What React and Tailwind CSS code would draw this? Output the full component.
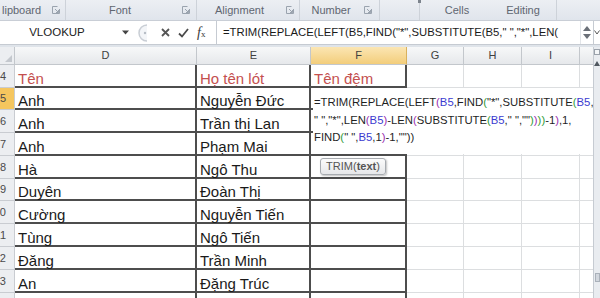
import React from "react";

const K = "#1f1f1f";
const BL = "#3b3bd0";
const PU = "#9a2fb0";
const GR = "#2f9b3a";

const formulaLines = [
  [["=TRIM(REPLACE(LEFT", K], ["(", PU], ["B5", BL], [",FIND", K], ["(", GR], ['"*",SUBSTITUTE', K], ["(", GR], ["B5", BL], [",", K]],
  [['" ","*",LEN', K], ["(", PU], ["B5", BL], [")", PU], ["-LEN", K], ["(", PU], ["SUBSTITUTE", K], ["(", GR], ["B5", BL], ['," ",""', K], [")", GR], [")", PU], [")", GR], [")", GR], ["-1", K], [")", PU], [",1,", K]],
  [["FIND", K], ["(", GR], ['" ",', K], ["B5", BL], [",1", K], [")", PU], ['-1,""))', K]],
];

const rows = [
  { n: 4, d: "Tên", e: "Họ tên lót", f: "Tên đệm", head: true, h: "h-[23px]" },
  { n: 5, d: "Anh", e: "Nguyễn Đức", h: "h-[22px]", active: true },
  { n: 6, d: "Anh", e: "Trần thị Lan", h: "h-[23px]" },
  { n: 7, d: "Anh", e: "Phạm Mai", h: "h-[23px]" },
  { n: 8, d: "Hà", e: "Ngô Thu", h: "h-[23px]" },
  { n: 9, d: "Duyên", e: "Đoàn Thị", h: "h-[22px]" },
  { n: 10, d: "Cường", e: "Nguyễn Tiến", h: "h-[23px]" },
  { n: 11, d: "Tùng", e: "Ngô Tiến", h: "h-[23px]" },
  { n: 12, d: "Đăng", e: "Trần Minh", h: "h-[23px]" },
  { n: 13, d: "An", e: "Đặng Trúc", h: "h-[23px]" },
  { n: 14, d: "", e: "", h: "h-[23px]" },
];

function Launcher() {
  return (
    <svg width="8" height="8" viewBox="0 0 8 8" className="shrink-0">
      <path d="M0.5 0.5H5.5M0.5 0.5V7.5H7.5V3" stroke="#9aa3ae" strokeWidth="1" fill="none" />
      <path d="M3 3L6.5 6.5M6.5 4V6.5H4" stroke="#9aa3ae" strokeWidth="1" fill="none" />
    </svg>
  );
}

function RibbonLabels() {
  return (
    <div className="flex h-[21px] bg-linear-to-b from-[#eceff3] to-[#e0e5ec] border-b border-[#c9ced6] text-[11px] text-[#5f6670]">
      <div className="w-[66px] shrink-0 flex items-center justify-between pl-[2px] pr-[5px] border-r border-[#cdd2d9]">
        <span>lipboard</span>
        <Launcher />
      </div>
      <div className="w-[131px] shrink-0 flex items-center pr-[6px] border-r border-[#cdd2d9]">
        <span className="flex-1 text-center pr-[8px]">Font</span>
        <Launcher />
      </div>
      <div className="w-[103px] shrink-0 flex items-center pr-[5px] border-r border-[#cdd2d9]">
        <span className="flex-1 text-center pr-[4px]">Alignment</span>
        <Launcher />
      </div>
      <div className="w-[80px] shrink-0 flex items-center pr-[7px] border-r border-[#cdd2d9]">
        <span className="flex-1 text-center pr-[2px]">Number</span>
        <Launcher />
      </div>
      <div className="w-[40px] shrink-0 border-r border-[#cdd2d9] relative">
        <div className="absolute right-[-2px] top-0 w-[3px] h-[3px] bg-[#7d848d]" />
      </div>
      <div className="w-[70px] shrink-0 flex items-center justify-center pl-[4px]">
        <span>Cells</span>
      </div>
      <div className="w-[67px] shrink-0 flex items-center justify-center border-r border-[#cdd2d9]">
        <span>Editing</span>
      </div>
      <div className="flex-1" />
    </div>
  );
}

function FormulaBar() {
  return (
    <div className="flex h-[26px] bg-[#dfe4ea] pb-[2px]">
      <div className="flex flex-1 h-[24px] bg-white border-b border-[#c6cbd2] items-center">
        <div className="w-[112px] shrink-0 flex items-center justify-center text-[11.5px] text-[#222] pl-[2px]">
          VLOOKUP
        </div>
        <div className="w-[26px] shrink-0 flex items-center justify-center">
          <svg width="7" height="5" viewBox="0 0 7 5">
            <path d="M0 0.5H7L3.5 4.5Z" fill="#444" />
          </svg>
        </div>
        <div className="w-[12px] shrink-0 flex items-center">
          <svg width="10" height="18" viewBox="0 0 10 18">
            <path d="M9 1A8 8 0 0 0 9 17" stroke="#c9ced5" strokeWidth="1.5" fill="#f3f5f8" />
            <circle cx="7" cy="9" r="1.2" fill="#b7bdc5" />
          </svg>
        </div>
        <div className="w-[66px] shrink-0 flex items-center gap-[8px] pl-[11px]">
          <svg width="9" height="9" viewBox="0 0 9 9">
            <path d="M1 1L8 8M8 1L1 8" stroke="#555" strokeWidth="1.8" />
          </svg>
          <svg width="11" height="10" viewBox="0 0 11 10">
            <path d="M1 5.5L4 8.5L10 1" stroke="#4a4a4a" strokeWidth="1.8" fill="none" />
          </svg>
          <span className="font-['Liberation_Serif',serif] italic text-[14px] leading-none text-[#3a3a3a]">
            f<span className="text-[9px] not-italic">x</span>
          </span>
        </div>
        <div className="flex-1 h-full flex items-center border-l border-[#c6cbd2] pl-[6px] text-[11.3px] text-[#1a1a1a] whitespace-nowrap overflow-hidden">
          =TRIM(REPLACE(LEFT(B5,FIND("*",SUBSTITUTE(B5," ","*",LEN(
        </div>
        <div className="w-[13px] shrink-0 h-full flex flex-col items-center justify-center gap-[3px] border-l border-[#e2e5e9]">
          <svg width="8" height="5" viewBox="0 0 8 5"><path d="M0 5L4 0L8 5Z" fill="#6b7078" /></svg>
          <svg width="8" height="5" viewBox="0 0 8 5"><path d="M0 0L4 5L8 0Z" fill="#6b7078" /></svg>
        </div>
        <div className="w-[7px] shrink-0 h-full flex items-center border-l border-[#c6cbd2]">
          <svg width="6" height="5" viewBox="0 0 6 5"><path d="M0.5 0.5L3 4L5.5 0.5" stroke="#555" fill="none" /></svg>
        </div>
      </div>
    </div>
  );
}

function ColumnHeaders() {
  const base = "h-[18px] shrink-0 flex items-center justify-center border-r border-b border-[#c3c7cc] text-[11px] text-[#3f3f3f]";
  return (
    <div className="flex">
      <div className="w-[15px] h-[18px] shrink-0 border-r border-b border-[#c3c7cc] bg-[#eceef1] flex items-end justify-end p-[2px]">
        <svg width="7" height="7" viewBox="0 0 7 7"><path d="M7 0V7H0Z" fill="#c4c8ce" /></svg>
      </div>
      <div className={base + " w-[182px] bg-linear-to-b from-[#f7f8f9] to-[#e6e8eb]"}>D</div>
      <div className={base + " w-[114px] bg-linear-to-b from-[#f7f8f9] to-[#e6e8eb]"}>E</div>
      <div className={base + " w-[96px] bg-linear-to-b from-[#fbe6b3] to-[#f3cd7a] border-r-[#d9b15d]"}>F</div>
      <div className={base + " w-[57px] bg-linear-to-b from-[#f7f8f9] to-[#e6e8eb]"}>G</div>
      <div className={base + " w-[58px] bg-linear-to-b from-[#f7f8f9] to-[#e6e8eb]"}>H</div>
      <div className={base + " w-[58px] bg-linear-to-b from-[#f7f8f9] to-[#e6e8eb]"}>I</div>
      <div className={base + " w-[13px] bg-linear-to-b from-[#f7f8f9] to-[#e6e8eb] border-r-0"}></div>
    </div>
  );
}

function Row({ r }) {
  const txt = r.head ? "text-[#c4504f]" : "text-[#1a1a1a]";
  const dark = "shrink-0 border-b-2 border-r-2 border-[#4d4d4d] flex items-end pl-[3px] whitespace-nowrap leading-[15px]";
  const light = "shrink-0 border-b border-r border-[#dcdee0]";
  return (
    <div className={"flex " + r.h}>
      <div
        className={
          "w-[15px] shrink-0 overflow-hidden flex items-center justify-end pr-[8px] text-[11px] text-[#4a4a4a] border-r border-b border-[#c9ccd1] " +
          (r.active ? "bg-[#f5c65e]" : "bg-[#eceef1]")
        }
      >
        <span className="whitespace-nowrap">{r.n}</span>
      </div>
      <div className={dark + " w-[182px] " + txt}>{r.d}</div>
      <div className={dark + " w-[114px] " + txt}>{r.e}</div>
      <div className={dark + " w-[96px] " + txt}>{r.f || ""}</div>
      <div className={light + " w-[57px]"} />
      <div className={light + " w-[58px]"} />
      <div className={light + " w-[58px]"} />
      <div className={light + " w-[13px] border-r-0"} />
    </div>
  );
}

function Scrollbar() {
  return (
    <div className="w-[7px] shrink-0 bg-[#e9ecf0] border-l border-[#c6cbd2] flex flex-col items-center">
      <div className="w-[6px] h-[6px] mt-[2px] border border-[#9aa1aa] bg-[#f4f6f8]" />
      <div className="mt-[6px]">
        <svg width="6" height="5" viewBox="0 0 6 5"><path d="M0 5L3 0L6 5Z" fill="#505860" /></svg>
      </div>
      <div className="mt-[207px] w-[5px] h-[9px] bg-[#d2d7de] border border-[#aab1ba]" />
    </div>
  );
}

export default function App() {
  return (
    <div className="w-[600px] h-[298px] overflow-hidden bg-white font-['Liberation_Sans',Arial,sans-serif]">
      <RibbonLabels />
      <FormulaBar />
      <div className="flex">
        <div className="w-[593px] shrink-0 relative">
          <ColumnHeaders />
          <div className="text-[15px]">
            {rows.map((r) => (
              <Row key={r.n} r={r} />
            ))}
          </div>
          <div className="absolute left-[313px] top-[41px] w-[280px] h-[66px] bg-white pt-[6px] pl-[1px] text-[11.3px] leading-[17.5px] whitespace-nowrap overflow-hidden">
            {formulaLines.map((line, i) => (
              <div key={i}>
                {line.map(([t, c], j) => (
                  <span key={j} style={{ color: c }}>
                    {t}
                  </span>
                ))}
              </div>
            ))}
          </div>
          <div className="absolute left-[320px] top-[111px] w-[66px] h-[17px] flex items-center justify-center rounded-[3px] border border-[#a7abb0] bg-linear-to-b from-[#fbfbfb] to-[#e6e7e9] shadow-[1px_1px_2px_rgba(0,0,0,0.25)] text-[11px] text-[#555]">
            TRIM(<span className="font-bold">text</span>)
          </div>
        </div>
        <Scrollbar />
      </div>
    </div>
  );
}
